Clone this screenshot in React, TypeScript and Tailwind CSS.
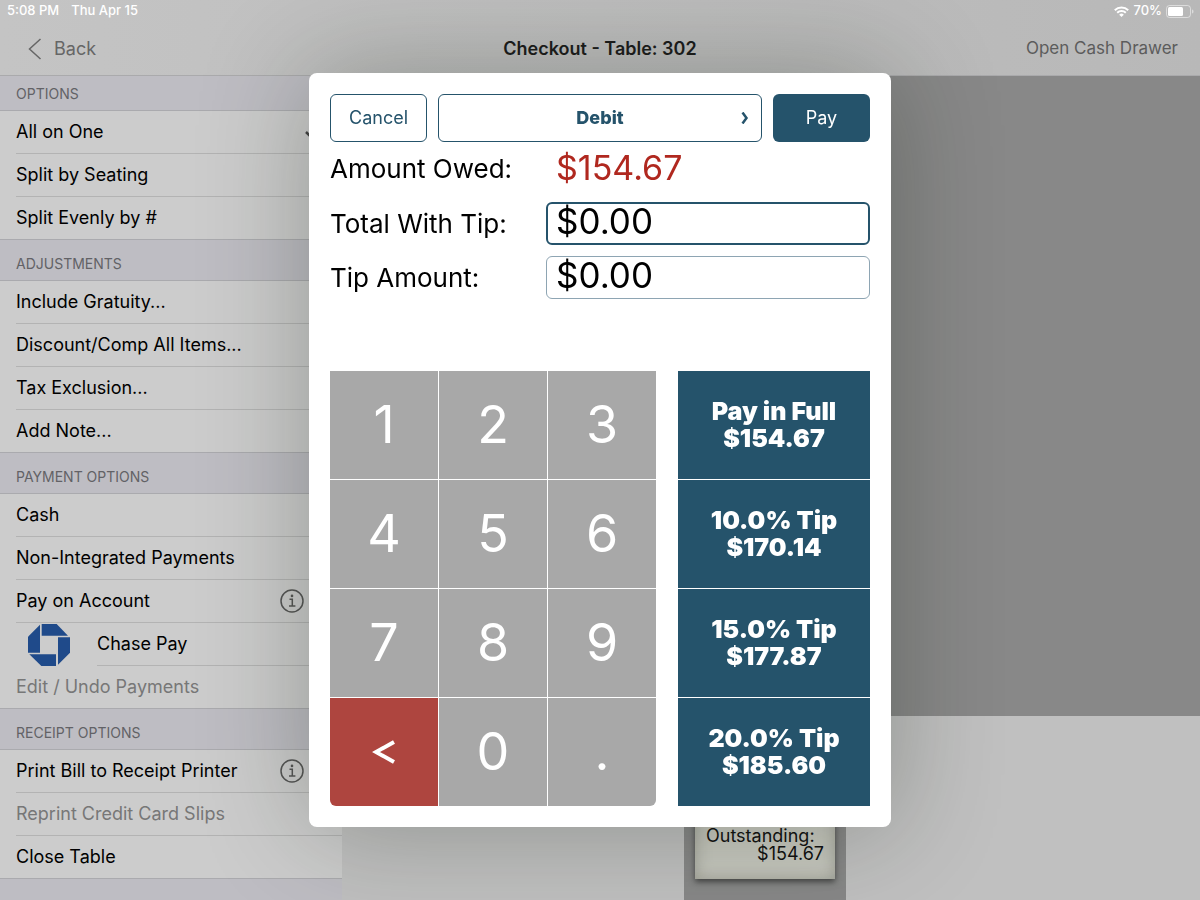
import { useState } from 'react'
import type { ReactNode } from 'react'

type Row = {
  label: string
  disabled?: boolean
  info?: boolean
  checked?: boolean
  logo?: boolean
}

const sections: { title: string; rows: Row[] }[] = [
  {
    title: 'OPTIONS',
    rows: [
      { label: 'All on One', checked: true },
      { label: 'Split by Seating' },
      { label: 'Split Evenly by #' },
    ],
  },
  {
    title: 'ADJUSTMENTS',
    rows: [
      { label: 'Include Gratuity...' },
      { label: 'Discount/Comp All Items...' },
      { label: 'Tax Exclusion...' },
      { label: 'Add Note...' },
    ],
  },
  {
    title: 'PAYMENT OPTIONS',
    rows: [
      { label: 'Cash' },
      { label: 'Non-Integrated Payments' },
      { label: 'Pay on Account', info: true },
      { label: 'Chase Pay', logo: true },
      { label: 'Edit / Undo Payments', disabled: true },
    ],
  },
  {
    title: 'RECEIPT OPTIONS',
    rows: [
      { label: 'Print Bill to Receipt Printer', info: true },
      { label: 'Reprint Credit Card Slips', disabled: true },
      { label: 'Close Table' },
    ],
  },
]

const keys = ['1', '2', '3', '4', '5', '6', '7', '8', '9', '<', '0', '.']

const tips = [
  { label: 'Pay in Full', amount: '$154.67' },
  { label: '10.0% Tip', amount: '$170.14' },
  { label: '15.0% Tip', amount: '$177.87' },
  { label: '20.0% Tip', amount: '$185.60' },
]

function WifiIcon() {
  return (
    <svg width="15" height="11" viewBox="0 0 15 11" fill="none" stroke="white" strokeWidth="2" aria-hidden="true">
      <path d="M0.8 4.2a9.6 9.6 0 0 1 13.4 0" />
      <path d="M3.2 6.8a6.1 6.1 0 0 1 8.6 0" />
      <path d="M7.5 11 5.2 8.7a3.3 3.3 0 0 1 4.6 0Z" fill="white" stroke="none" />
    </svg>
  )
}

function BatteryIcon() {
  return (
    <svg width="28" height="13" viewBox="0 0 28 13" fill="none" aria-hidden="true">
      <rect x="0.5" y="0.5" width="24" height="12" rx="3" stroke="white" strokeOpacity="0.5" />
      <rect x="2" y="2" width="15" height="9" rx="1.5" fill="white" />
      <path d="M26 4.5v4c1-.3 1.5-1 1.5-2s-.5-1.7-1.5-2Z" fill="white" fillOpacity="0.5" />
    </svg>
  )
}

function InfoIcon() {
  return (
    <svg width="24" height="24" viewBox="0 0 24 24" fill="none" stroke="#555" strokeWidth="1.5" aria-hidden="true">
      <circle cx="12" cy="12" r="11" />
      <path d="M9.5 10.3h2.8v6.5M9 16.9h6.4" />
      <circle cx="12" cy="6.9" r="1.3" fill="#555" stroke="none" />
    </svg>
  )
}

function ChaseLogo() {
  return (
    <svg width="42" height="42" viewBox="0 0 126 126" fill="#1f4a8a" aria-hidden="true">
      <path d="M41 0h45l34 35H41Z" />
      <path d="M36 2v84H0V38Z" />
      <path d="M4 91h80v35H40Z" />
      <path d="M90 40h36v46l-36 36Z" />
    </svg>
  )
}

function SectionTitle({ children, first }: { children: ReactNode; first: boolean }) {
  return (
    <h2
      className={`flex items-end border-b border-[#aaaaae] bg-[#bebdc3] px-4 pb-2 text-sm leading-4 text-[#626266] ${
        first ? 'h-[35px]' : 'h-[41px]'
      }`}
    >
      {children}
    </h2>
  )
}

function OptionRow({ row, last }: { row: Row; last: boolean }) {
  return (
    <li className={`flex h-[43px] items-center ${last ? 'border-b border-[#aaaaae]' : ''}`}>
      {row.logo && (
        <span className="ml-7 mr-[27px] shrink-0">
          <ChaseLogo />
        </span>
      )}
      <div
        className={`flex h-full flex-1 items-center justify-between ${row.logo ? '' : 'ml-4'} ${
          last ? '' : 'border-b border-[#b3b3b3]'
        }`}
      >
        <button
          type="button"
          disabled={row.disabled}
          className={`h-full flex-1 text-left ${row.disabled ? 'text-[#777]' : 'text-black'}`}
        >
          {row.label}
        </button>
        {row.info && (
          <button type="button" aria-label={`About ${row.label}`} className="mr-[38px]">
            <InfoIcon />
          </button>
        )}
        {row.checked && (
          <svg width="18" height="14" viewBox="0 0 18 14" fill="none" stroke="#444" strokeWidth="2.5" className="mr-5" aria-hidden="true">
            <path d="m2 7 5 5L16 1" />
          </svg>
        )}
      </div>
    </li>
  )
}

function Sidebar() {
  return (
    <aside className="w-[342px] shrink-0 bg-[#bebdc3] text-lg">
      {sections.map((section, i) => (
        <section key={section.title}>
          <SectionTitle first={i === 0}>{section.title}</SectionTitle>
          <ul className="bg-[#cccccc]">
            {section.rows.map((row, j) => (
              <OptionRow key={row.label} row={row} last={j === section.rows.length - 1} />
            ))}
          </ul>
        </section>
      ))}
    </aside>
  )
}

function PaymentDialog() {
  const [total, setTotal] = useState('$0.00')
  const [tip, setTip] = useState('$0.00')

  return (
    <div
      role="dialog"
      aria-label="Payment"
      className="w-[582px] rounded-lg bg-white p-[21px] shadow-[0_0_110px_rgba(20,30,15,0.3)]"
    >
      <div className="flex h-12 gap-[11px] text-lg text-[#25536b]">
        <button type="button" className="w-[97px] rounded-md border border-[#25536b]">
          Cancel
        </button>
        <button type="button" className="flex flex-1 items-center rounded-md border border-[#25536b] px-3 font-extrabold">
          <span className="flex-1 pl-2">Debit</span>
          <svg width="8" height="12" viewBox="0 0 8 12" fill="none" stroke="currentColor" strokeWidth="2.5" aria-hidden="true">
            <path d="M1.5 0.5 5.5 6l-4 5.5" />
          </svg>
        </button>
        <button type="button" className="w-[97px] rounded-md bg-[#25536b] text-white">
          Pay
        </button>
      </div>

      <div className="mt-1 grid grid-cols-[1fr_324px] items-center gap-y-[11px] text-[26px] text-black">
        <span>Amount Owed:</span>
        <output className="flex h-[45px] items-center px-[10px] pb-0.5 text-[34px] text-[#b0281f]">$154.67</output>
        <label htmlFor="total">Total With Tip:</label>
        <input
          id="total"
          value={total}
          onChange={(e) => setTotal(e.target.value)}
          className="h-[43px] w-full rounded-md border-2 border-[#25536b] px-2 pb-1 text-[35px] outline-none"
        />
        <label htmlFor="tip">Tip Amount:</label>
        <input
          id="tip"
          value={tip}
          onChange={(e) => setTip(e.target.value)}
          className="h-[43px] w-full rounded-md border border-[#8ea5b3] px-[9px] pb-1 text-[35px] outline-none"
        />
      </div>

      <div className="mt-[72px] flex gap-[22px] text-white">
        <div className="grid flex-1 auto-rows-[108px] grid-cols-3 gap-px overflow-hidden rounded-b-md">
          {keys.map((key) => (
            <button
              key={key}
              type="button"
              aria-label={key === '<' ? 'Delete' : key}
              className={`text-[52px] ${key === '<' ? 'bg-[#ae453f]' : 'bg-[#a8a8a8]'}`}
            >
              {key === '<' ? (
                <svg width="24" height="24" viewBox="0 0 24 24" fill="none" stroke="white" strokeWidth="4" className="mx-auto" aria-hidden="true">
                  <path d="M22 2 4 12l18 10" />
                </svg>
              ) : (
                key
              )}
            </button>
          ))}
        </div>
        <div className="grid w-48 auto-rows-[108px] gap-px">
          {tips.map((t) => (
            <button key={t.label} type="button" className="bg-[#25536b] text-[25px] leading-[27px] font-black">
              <span className="block">{t.label}</span>
              <span className="block">{t.amount}</span>
            </button>
          ))}
        </div>
      </div>
    </div>
  )
}

export default function App() {
  return (
    <div className="flex min-h-screen flex-col bg-[#c0c0c0] font-['Inter','Liberation_Sans',sans-serif]">
      <header className="flex h-[76px] flex-col border-b border-[#aaaaac] bg-linear-to-r from-[#c4c4c4] to-[#b8b8b8]">
        <div className="flex h-[22px] items-center justify-between pl-[7px] pr-[6px] text-[13px] font-medium text-white">
          <div className="flex gap-3">
            <span>5:08 PM</span>
            <span>Thu Apr 15</span>
          </div>
          <div className="flex items-center gap-1">
            <WifiIcon />
            <span>70%</span>
            <BatteryIcon />
          </div>
        </div>
        <div className="grid flex-1 grid-cols-3 items-center px-[22px] text-lg text-[#666]">
          <button type="button" className="flex items-center gap-3 justify-self-start pl-[6px]">
            <svg width="14" height="22" viewBox="0 0 14 22" fill="none" stroke="#666" strokeWidth="1.5" aria-hidden="true">
              <path d="M12.5 1 1.5 11l11 10" />
            </svg>
            Back
          </button>
          <h1 className="text-center font-semibold text-[#1c1c1c]">Checkout - Table: 302</h1>
          <button type="button" className="justify-self-end text-[17px] text-[#5c5c5c]">
            Open Cash Drawer
          </button>
        </div>
      </header>

      <div className="flex flex-1">
        <Sidebar />
        <main className="flex flex-1 flex-col">
          <div className="flex-1 bg-[#888888]" />
          <div className="flex h-[184px]">
            <div className="flex-1" />
            <div className="w-[162px] bg-[#888888] px-[11px]">
              <div className="flex h-[163px] flex-col justify-end bg-[#c8c9c0] px-[11px] pb-4 text-lg leading-[18px] text-[#111] shadow-[0_3px_6px_rgba(0,0,0,0.5),inset_0_0_16px_rgba(90,90,80,0.4)]">
                <span>Outstanding:</span>
                <span className="text-right">$154.67</span>
              </div>
            </div>
            <div className="w-[354px]" />
          </div>
        </main>
      </div>

      <div className="fixed inset-0 flex items-center justify-center">
        <PaymentDialog />
      </div>
    </div>
  )
}
